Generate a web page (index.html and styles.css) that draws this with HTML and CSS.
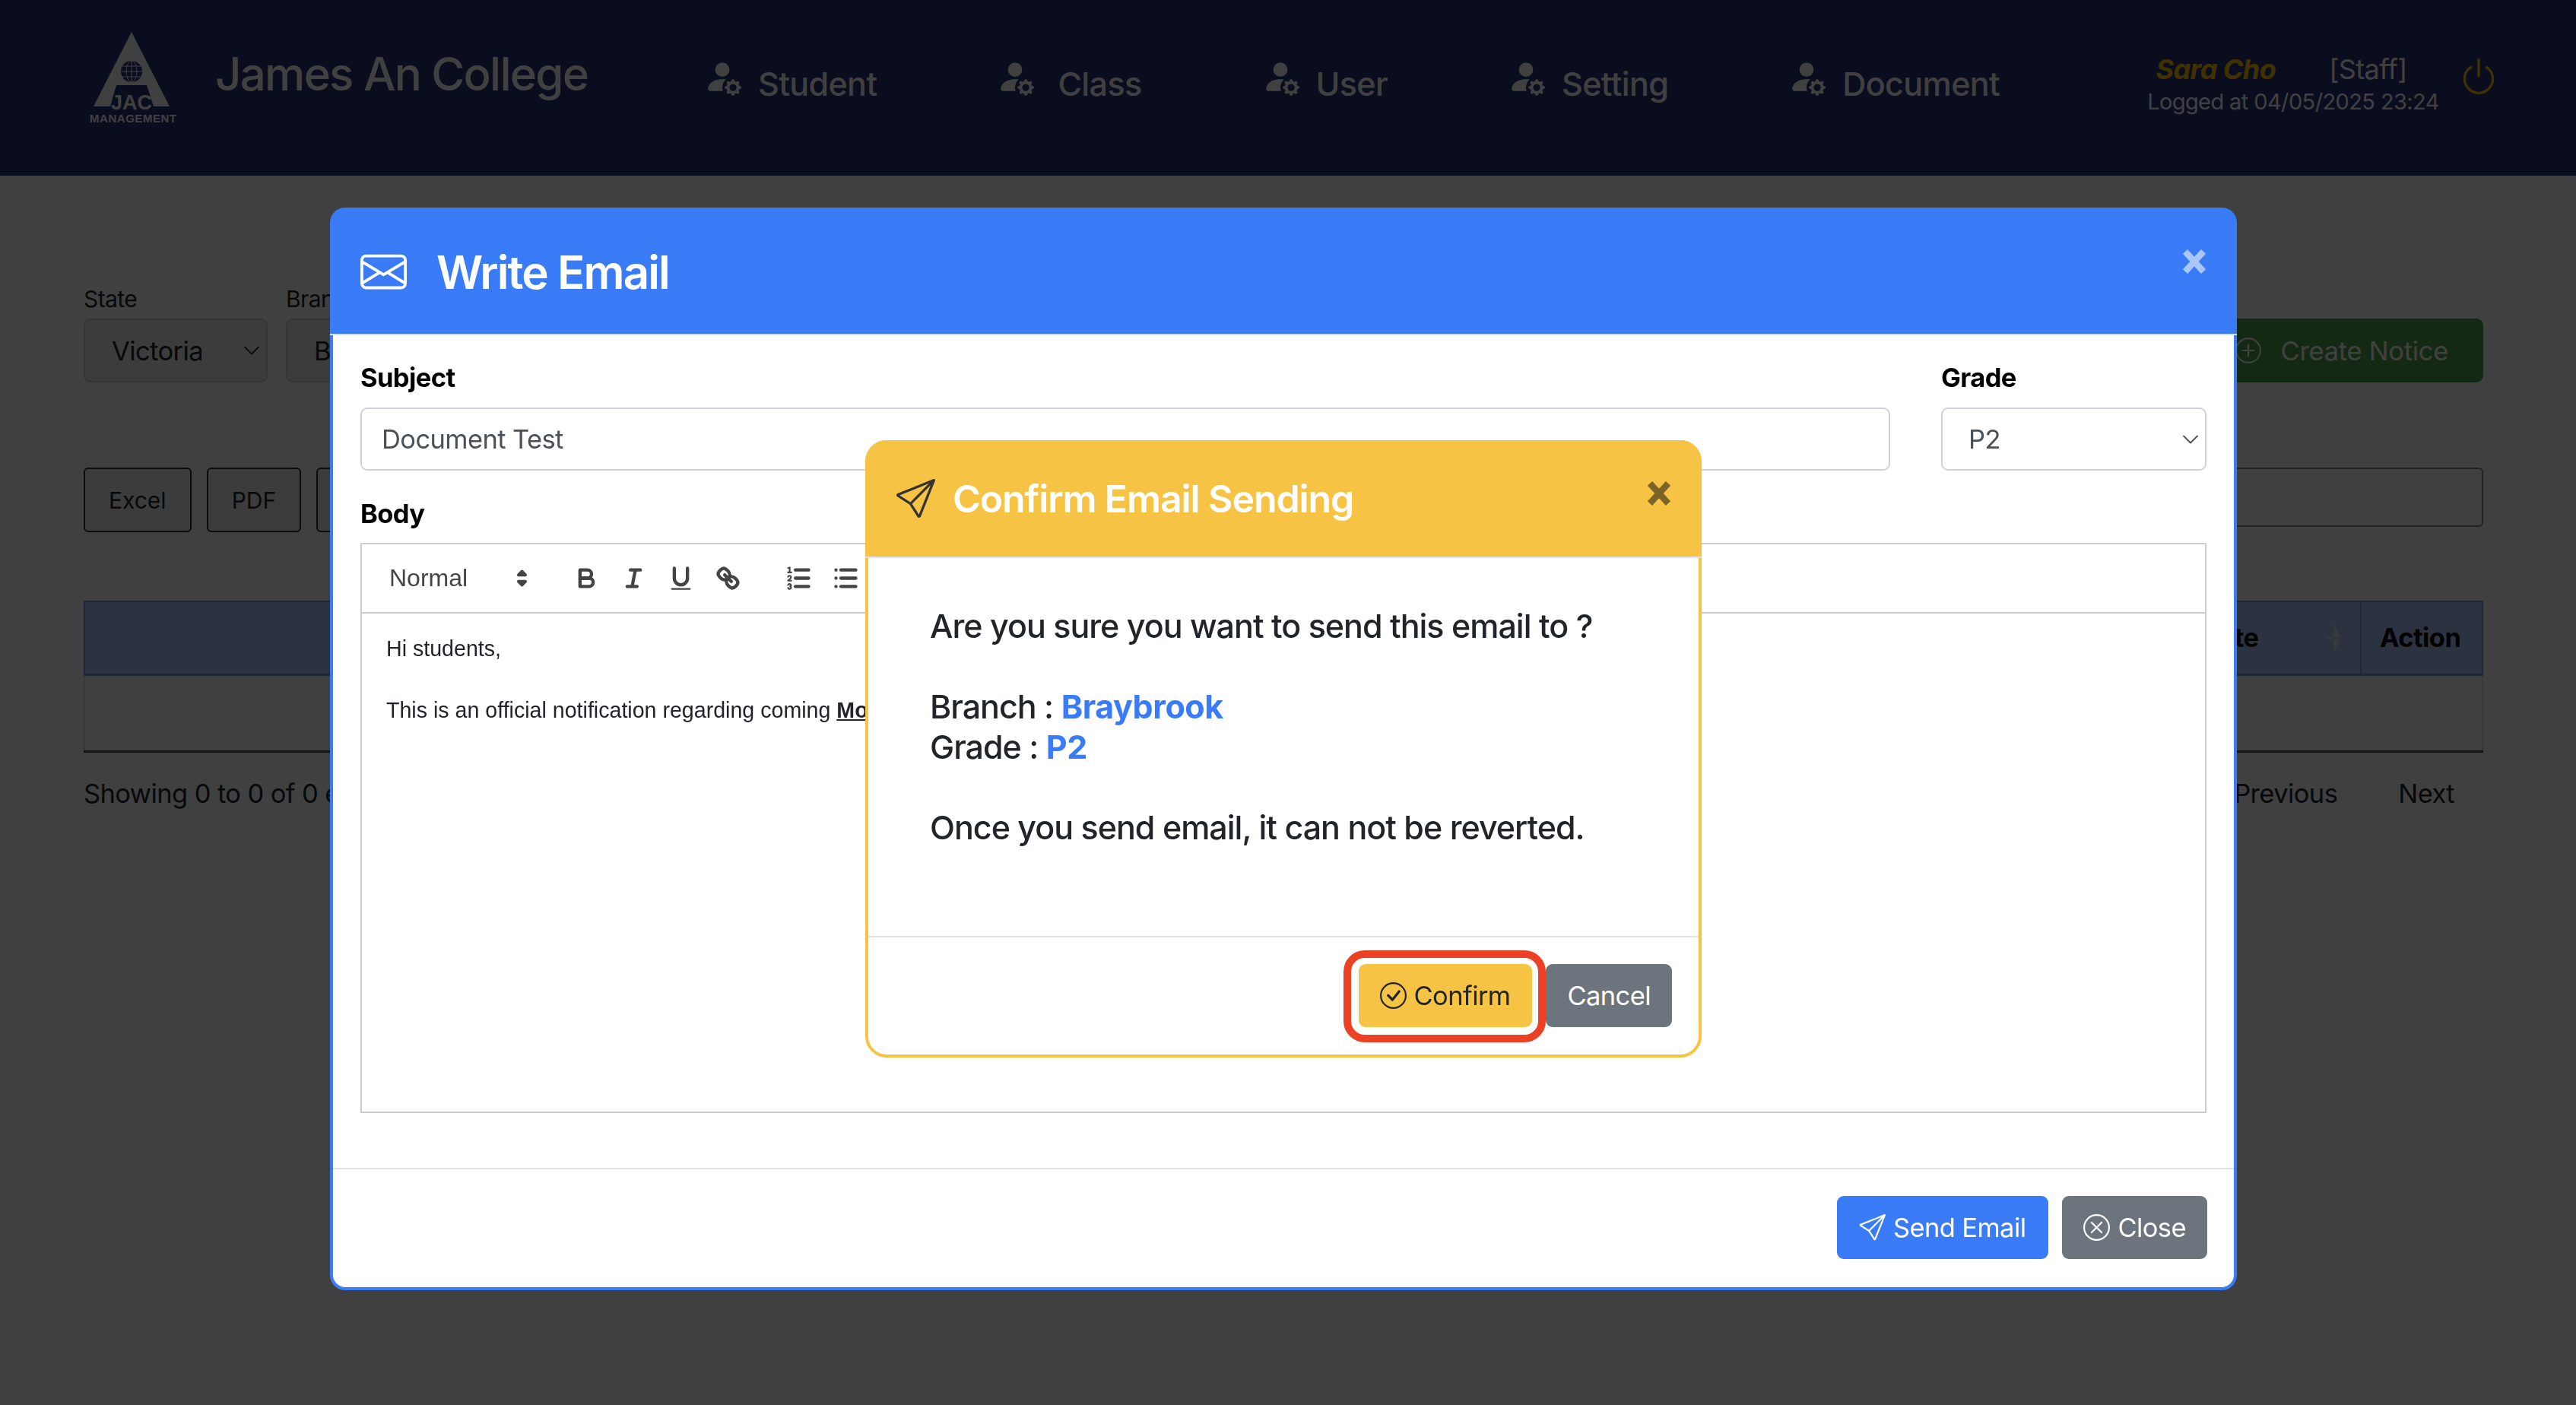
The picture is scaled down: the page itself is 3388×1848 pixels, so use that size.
FILE: index.html
```html
<!DOCTYPE html>
<html lang="en">

<head>
    <meta charset="UTF-8">
    <title>James An College</title>
    <link rel="stylesheet" href="styles.css">
</head>

<body>
    <svg class="icon-defs" width="0" height="0">
        <symbol id="i-gear" viewBox="0 0 16 16">
            <path d="M11 5a3 3 0 1 1-6 0 3 3 0 0 1 6 0Zm-9 8c0 1 1 1 1 1h5.256A4.493 4.493 0 0 1 8 12.5a4.5 4.5 0 0 1 1.544-3.393C9.077 9.038 8.564 9 8 9c-5 0-6 3-6 4Zm9.886-3.54c.18-.613 1.048-.613 1.229 0l.043.148a.64.64 0 0 0 .921.382l.136-.074c.561-.306 1.175.308.87.869l-.075.136a.64.64 0 0 0 .382.92l.149.045c.612.18.612 1.048 0 1.229l-.15.043a.64.64 0 0 0-.38.921l.074.136c.305.561-.309 1.175-.87.87l-.136-.075a.64.64 0 0 0-.92.382l-.045.149c-.18.612-1.048.612-1.229 0l-.043-.15a.64.64 0 0 0-.921-.38l-.136.074c-.561.305-1.175-.309-.87-.87l.075-.136a.64.64 0 0 0-.382-.92l-.148-.045c-.613-.18-.613-1.048 0-1.229l.148-.043a.64.64 0 0 0 .382-.921l-.074-.136c-.306-.561.308-1.175.869-.87l.136.075a.64.64 0 0 0 .92-.382l.045-.148ZM14 12.5a1.5 1.5 0 1 0-3 0 1.5 1.5 0 0 0 3 0Z" />
        </symbol>
        <symbol id="i-send" viewBox="0 0 16 16">
            <path d="M15.854.146a.5.5 0 0 1 .11.54l-5.819 14.547a.75.75 0 0 1-1.329.124l-3.178-4.995L.643 7.184a.75.75 0 0 1 .124-1.33L15.314.037a.5.5 0 0 1 .54.11ZM6.636 10.07l2.761 4.338L14.13 2.576 6.636 10.07Zm6.787-8.201L1.591 6.602l4.339 2.76 7.494-7.493Z" />
        </symbol>
        <symbol id="i-circle" viewBox="0 0 16 16">
            <path d="M8 15A7 7 0 1 1 8 1a7 7 0 0 1 0 14zm0 1A8 8 0 1 0 8 0a8 8 0 0 0 0 16z" />
        </symbol>
        <symbol id="i-chevron" viewBox="0 0 16 16">
            <path d="m2 5 6 6 6-6" fill="none" stroke="currentColor" stroke-width="1.2" stroke-linecap="round" stroke-linejoin="round" />
        </symbol>
        <symbol id="i-close" viewBox="0 0 30 30">
            <path d="M5 4l20 22M25 4L5 26" fill="none" stroke="currentColor" stroke-width="7" />
        </symbol>
    </svg>

    <div class="page">
        <header class="topbar">
            <svg class="logo" viewBox="0 0 116 125" width="116" height="125">
                <path d="M55 2 105 100H84L75 72H35L27 100H5Z" fill="currentColor" />
                <circle cx="55" cy="54" r="14" fill="#28347a" />
                <g fill="none" stroke="#fff" stroke-width="1">
                    <ellipse cx="55" cy="54" rx="7" ry="14" />
                    <path d="M55 40v28M41 54h28M43 47h24M43 61h24" />
                </g>
                <text class="logo-jac" x="55" y="104" text-anchor="middle">JAC</text>
                <text class="logo-sub" x="0" y="121" textLength="114">MANAGEMENT</text>
            </svg>
            <div class="brand">James An College</div>
            <nav class="nav">
                <a class="nav-item"><svg class="nav-icon"><use href="#i-gear" /></svg>Student</a>
                <a class="nav-item nav-item-class"><svg class="nav-icon"><use href="#i-gear" /></svg>Class</a>
                <a class="nav-item"><svg class="nav-icon"><use href="#i-gear" /></svg>User</a>
                <a class="nav-item"><svg class="nav-icon"><use href="#i-gear" /></svg>Setting</a>
                <a class="nav-item"><svg class="nav-icon"><use href="#i-gear" /></svg>Document</a>
            </nav>
            <div class="account">
                <div class="account-name"><b>Sara Cho</b><span>[Staff]</span></div>
                <div class="account-time">Logged at 04/05/2025 23:24</div>
            </div>
            <svg class="power" viewBox="0 0 16 16" width="54" height="54">
                <path d="M7.5 1v7h1V1h-1z" />
                <path d="M3 8.812a4.999 4.999 0 0 1 2.578-4.375l-.485-.874A6 6 0 1 0 11 3.616l-.501.865A5 5 0 1 1 3 8.812z" />
            </svg>
        </header>

        <main class="content">
            <div class="filters">
                <div class="filter">
                    <label>State</label>
                    <div class="page-select"><span>Victoria</span><svg class="chev"><use href="#i-chevron" /></svg></div>
                </div>
                <div class="filter">
                    <label>Branch</label>
                    <div class="page-select"><span>Braybrook</span></div>
                </div>
                <a class="btn-create">
                    <svg viewBox="0 0 16 16" width="34" height="34">
                        <use href="#i-circle" />
                        <path d="M8 4a.5.5 0 0 1 .5.5v3h3a.5.5 0 0 1 0 1h-3v3a.5.5 0 0 1-1 0v-3h-3a.5.5 0 0 1 0-1h3v-3A.5.5 0 0 1 8 4z" />
                    </svg>
                    Create Notice
                </a>
            </div>

            <div class="tools">
                <button class="tool-btn">Excel</button>
                <button class="tool-btn">PDF</button>
                <button class="tool-btn tool-hidden"></button>
                <div class="search"></div>
            </div>

            <table class="notice-table">
                <thead>
                    <tr>
                        <th></th>
                        <th class="col-date">Date<span class="sort"></span></th>
                        <th class="col-action">Action</th>
                    </tr>
                </thead>
                <tbody>
                    <tr>
                        <td colspan="3"></td>
                    </tr>
                </tbody>
            </table>

            <div class="table-foot">
                <span>Showing 0 to 0 of 0 entries</span>
                <div class="pager"><a>Previous</a><a>Next</a></div>
            </div>
        </main>
    </div>

    <div class="backdrop"></div>

    <section class="modal modal-write">
        <div class="write-head">
            <svg class="envelope" viewBox="0 0 16 16" width="61" height="61">
                <path d="M0 4a2 2 0 0 1 2-2h12a2 2 0 0 1 2 2v8a2 2 0 0 1-2 2H2a2 2 0 0 1-2-2V4Zm2-1a1 1 0 0 0-1 1v.217l7 4.2 7-4.2V4a1 1 0 0 0-1-1H2Zm13 2.383-4.708 2.825L15 11.105V5.383Zm-.034 6.876-5.64-3.471L8 9.583l-1.326-.795-5.64 3.47A1 1 0 0 0 2 13h12a1 1 0 0 0 .966-.741ZM1 11.105l4.708-2.897L1 5.383v5.722Z" />
            </svg>
            <h2>Write Email</h2>
            <svg class="close-x close-light"><use href="#i-close" /></svg>
        </div>

        <div class="write-body">
            <div class="form-row">
                <div class="field field-subject">
                    <label>Subject</label>
                    <div class="control">Document Test</div>
                </div>
                <div class="field field-grade">
                    <label>Grade</label>
                    <div class="control control-select"><span>P2</span><svg class="chev"><use href="#i-chevron" /></svg></div>
                </div>
            </div>

            <label class="body-label">Body</label>
            <div class="editor">
                <div class="toolbar">
                    <span class="picker">Normal
                        <svg class="ql" viewBox="0 0 18 18">
                            <polygon points="7 11 9 13 11 11 7 11" />
                            <polygon points="7 7 9 5 11 7 7 7" />
                        </svg>
                    </span>
                    <span class="tool-group">
                        <svg class="ql" viewBox="0 0 18 18">
                            <path d="M5,4H9.5A2.5,2.5,0,0,1,12,6.5v0A2.5,2.5,0,0,1,9.5,9H5A0,0,0,0,1,5,9V4A0,0,0,0,1,5,4Z" />
                            <path d="M5,9h5.5A2.5,2.5,0,0,1,13,11.5v0A2.5,2.5,0,0,1,10.5,14H5a0,0,0,0,1,0,0V9A0,0,0,0,1,5,9Z" />
                        </svg>
                        <svg class="ql" viewBox="0 0 18 18">
                            <path d="M7 4h6M5 14h6M8 14l2-10" />
                        </svg>
                        <svg class="ql" viewBox="0 0 18 18">
                            <path d="M5,3V9a4.012,4.012,0,0,0,4,4H9a4.012,4.012,0,0,0,4-4V3" />
                            <rect class="ql-fill" height="1" rx=".5" ry=".5" width="12" x="3" y="15" />
                        </svg>
                        <svg class="ql" viewBox="0 0 18 18">
                            <path d="M7 7l4 4" />
                            <path d="M8.9,4.577a3.476,3.476,0,0,1,.36,4.679A3.476,3.476,0,0,1,4.577,8.9C3.185,7.5,2.035,6.4,4.217,4.217S7.5,3.185,8.9,4.577Z" />
                            <path d="M13.423,9.1a3.476,3.476,0,0,0-4.679-.36,3.476,3.476,0,0,0,.36,4.679c1.392,1.392,2.5,2.542,4.679.36S14.815,10.5,13.423,9.1Z" />
                        </svg>
                    </span>
                    <span class="tool-group tool-group-lists">
                        <svg class="ql" viewBox="0 0 18 18">
                            <path d="M7 4h8M7 9h8M7 14h8" />
                            <path class="ql-thin" d="M2.5 5.5h2" />
                            <path class="ql-fill" d="M3.5,6A0.5,0.5,0,0,1,3,5.5V3.085l-0.276.138A0.5,0.5,0,0,1,2.053,3c-0.124-.247-0.023-0.324.224-0.447l1-.5A0.5,0.5,0,0,1,4,2.5v3A0.5,0.5,0,0,1,3.5,6Z" />
                            <path class="ql-thin" d="M4.5,10.5h-2c0-.234,1.85-1.076,1.85-2.234A0.959,0.959,0,0,0,2.5,8.156" />
                            <path class="ql-thin" d="M2.5,14.846a0.959,0.959,0,0,0,1.85-.109A0.7,0.7,0,0,0,3.75,14a0.688,0.688,0,0,0,.6-0.736,0.959,0.959,0,0,0-1.85-.109" />
                        </svg>
                        <svg class="ql" viewBox="0 0 18 18">
                            <path d="M6 4h9M6 9h9M6 14h9M3 4h0M3 9h0M3 14h0" />
                        </svg>
                    </span>
                </div>
                <div class="editor-text">
                    <p>Hi students,</p>
                    <p><br></p>
                    <p>This is an official notification regarding coming <strong><u>Mo</u></strong></p>
                </div>
            </div>
        </div>

        <div class="modal-foot write-foot">
            <button class="btn btn-blue">
                <svg class="btn-icon"><use href="#i-send" /></svg>Send Email
            </button>
            <button class="btn btn-grey">
                <svg class="btn-icon" viewBox="0 0 16 16">
                    <use href="#i-circle" />
                    <path d="M4.646 4.646a.5.5 0 0 1 .708 0L8 7.293l2.646-2.647a.5.5 0 0 1 .708.708L8.707 8l2.647 2.646a.5.5 0 0 1-.708.708L8 8.707l-2.646 2.647a.5.5 0 0 1-.708-.708L7.293 8 4.646 5.354a.5.5 0 0 1 0-.708z" />
                </svg>Close
            </button>
        </div>
    </section>

    <section class="modal modal-confirm">
        <div class="confirm-head">
            <svg class="confirm-send"><use href="#i-send" /></svg>
            <h3>Confirm Email Sending</h3>
            <svg class="close-x close-dark"><use href="#i-close" /></svg>
        </div>
        <div class="confirm-body">
            Are you sure you want to send this email to ?<br><br>
            Branch : <b>Braybrook</b><br>
            Grade : <b>P2</b><br><br>
            Once you send email, it can not be reverted.
        </div>
        <div class="modal-foot confirm-foot">
            <button class="btn btn-yellow">
                <svg class="btn-icon" viewBox="0 0 16 16">
                    <use href="#i-circle" />
                    <path d="M10.97 4.97a.235.235 0 0 0-.02.022L7.477 9.417 5.384 7.323a.75.75 0 0 0-1.06 1.06L6.97 11.03a.75.75 0 0 0 1.079-.02l3.992-4.99a.75.75 0 0 0-1.071-1.05z" />
                </svg>Confirm
                <span class="callout"></span>
            </button>
            <button class="btn btn-grey">Cancel</button>
        </div>
    </section>
</body>

</html>
```

FILE: styles.css
```css
* {
    box-sizing: border-box;
}

body {
    margin: 0;
    width: 3388px;
    height: 1848px;
    overflow: hidden;
    background-color: #fff;
    color: #212529;
    font-family: Inter, "Liberation Sans", sans-serif;
    font-size: 34.5px;
    letter-spacing: -0.6px;
}

.icon-defs {
    position: absolute;
}

svg {
    fill: currentColor;
    flex-shrink: 0;
}

/* page under the modals */
.topbar {
    display: flex;
    height: 231px;
    padding-left: 118px;
    background-color: #28347a;
    color: #fff;
}

.logo {
    margin-top: 40px;
}

.logo-jac {
    font-family: "Liberation Sans", sans-serif;
    font-size: 27px;
    font-weight: bold;
    letter-spacing: 0;
    fill: #fff;
}

.logo-sub {
    font-family: "Liberation Sans", sans-serif;
    font-size: 15px;
    font-weight: bold;
    letter-spacing: 0;
    fill: #fff;
}

.brand {
    width: 489px;
    margin: 58px 0 0 49px;
    font-size: 60px;
    line-height: 78px;
    font-weight: 500;
    letter-spacing: -1.75px;
    white-space: nowrap;
}

.nav {
    display: flex;
    gap: 163px;
    margin: 80px 0 0 159px;
}

.nav-item {
    display: flex;
    height: 60px;
    font-size: 43px;
    font-weight: 500;
    line-height: 60px;
}

.nav-icon {
    width: 50px;
    height: 50px;
    margin: -4px 22px 0 -6px;
}

.nav-item-class .nav-icon {
    margin-right: 31px;
}

.account {
    width: 379px;
    margin: 68px 0 0 194px;
    text-align: center;
    white-space: nowrap;
}

.account-name {
    display: flex;
    justify-content: center;
    gap: 70px;
    margin-right: 26px;
    font-size: 36px;
    line-height: 46px;
}

.account-name b {
    color: #ffc107;
    font-style: italic;
}

.account-time {
    font-size: 29px;
    line-height: 40px;
}

.power {
    margin: 74px 0 0 30px;
    color: #ffc107;
}

.content {
    padding: 0 122px 0 110px;
    color: #212529;
}

.filters {
    display: flex;
    align-items: flex-end;
    gap: 24px;
    margin-top: 144px;
}

.filter label {
    display: block;
    margin-bottom: 7px;
    font-size: 30px;
    line-height: 37px;
}

.page-select {
    display: flex;
    align-items: center;
    justify-content: space-between;
    width: 242px;
    height: 84px;
    padding: 0 7px 0 35px;
    border: 2px solid #ced4da;
    border-radius: 9px;
    background-color: #eef0ee;
}

.btn-create {
    display: flex;
    align-items: center;
    gap: 26px;
    height: 84px;
    margin-left: auto;
    padding: 0 46px 0 30px;
    border-radius: 9px;
    background-color: #51a54d;
    color: #fff;
    letter-spacing: -0.3px;
}

.tools {
    display: flex;
    align-items: flex-start;
    gap: 20px;
    margin-top: 112px;
}

.tool-btn {
    height: 85px;
    padding: 0 31px;
    border: 2px solid #333;
    border-radius: 6px;
    background-color: #f0f0f0;
    color: #212529;
    font-family: inherit;
    font-size: 30px;
}

.tool-hidden {
    width: 125px;
}

.search {
    flex: 1;
    height: 78px;
    border: 2px solid #888;
    border-radius: 6px;
}

.notice-table {
    width: 100%;
    margin-top: 90px;
    border-collapse: collapse;
    table-layout: fixed;
}

.notice-table th {
    height: 96px;
    padding: 0 24px;
    border: 2px solid #7ea0dc;
    border-bottom-width: 3px;
    background-color: #b1ccfe;
    color: #000;
    font-weight: 700;
    text-align: left;
}

.notice-table .col-date {
    position: relative;
    width: 239px;
    padding-left: 28px;
}

.col-action {
    width: 160px;
}

.sort {
    position: absolute;
    top: 28px;
    right: 26px;
    width: 18px;
    height: 39px;
    background-color: #dfe3ec;
    clip-path: polygon(50% 0, 100% 47%, 0 47%, 0 53%, 100% 53%, 50% 100%);
}

.notice-table td {
    height: 101px;
    border: 2px solid #e4e4e4;
    border-bottom: 3px solid #555;
}

.table-foot {
    display: flex;
    align-items: center;
    justify-content: space-between;
    margin-top: 33px;
}

.pager {
    display: flex;
    gap: 80px;
    margin-right: 38px;
}

.backdrop {
    position: fixed;
    inset: 0;
    background-color: rgba(0, 0, 0, 0.75);
}

/* modals */
.modal {
    position: absolute;
    display: flex;
    flex-direction: column;
    background-color: #fff;
    border-style: solid;
    border-width: 4px;
}

.modal-write {
    top: 273px;
    left: 434px;
    width: 2508px;
    height: 1424px;
    border-color: #3a7bf7;
    border-radius: 20px;
}

.write-head {
    display: flex;
    align-items: center;
    flex-shrink: 0;
    height: 165px;
    margin: -1px -4px 0;
    padding: 0 36px 0 40px;
    border-bottom: 2px solid #dee2e6;
    background-color: #3a7bf7;
    border-radius: 20px 20px 0 0;
    color: #fff;
}

.write-head h2 {
    margin: 0 0 0 39px;
    font-size: 60px;
    font-weight: 600;
    letter-spacing: -1.9px;
}

.close-x {
    width: 36px;
    height: 36px;
    margin-left: auto;
}

.close-light {
    margin-top: -28px;
    margin-right: 2px;
    color: #aac6fb;
}

.write-body {
    flex: 1;
    padding: 30px 36px 0;
}

.form-row {
    display: flex;
    gap: 67px;
}

.field-subject {
    flex: 1;
}

.field-grade {
    width: 349px;
}

.field label,
.body-label {
    display: block;
    margin-bottom: 13px;
    color: #000;
    font-weight: 700;
    font-size: 34.5px;
    line-height: 52px;
}

.control {
    height: 83px;
    padding: 0 26px;
    border: 2px solid #ced4da;
    border-radius: 9px;
    color: #495057;
    line-height: 80px;
}

.control-select {
    display: flex;
    align-items: center;
    justify-content: space-between;
    padding: 0 7px 0 34px;
}

.chev {
    width: 24px;
    height: 24px;
}

.body-label {
    margin: 31px 0 12px;
}

.editor {
    height: 750px;
    border: 2px solid #ccc;
    letter-spacing: 0;
}

.toolbar {
    display: flex;
    align-items: center;
    height: 91px;
    padding-left: 36px;
    border-bottom: 2px solid #ccc;
    color: #444;
    font-family: "Liberation Sans", sans-serif;
}

.picker {
    display: flex;
    align-items: center;
    justify-content: space-between;
    width: 218px;
    padding-right: 24px;
    font-size: 32px;
}

.ql {
    width: 39px;
    height: 39px;
    fill: none;
    stroke: #444;
    stroke-width: 2;
    stroke-linecap: round;
    stroke-linejoin: round;
}

.picker .ql {
    fill: #444;
    stroke-width: 2;
}

.ql .ql-fill {
    fill: #444;
    stroke: none;
}

.ql .ql-thin {
    stroke-width: 1;
}

.tool-group {
    display: flex;
    gap: 23px;
    margin-left: 22px;
}

.tool-group-lists {
    margin-left: 54px;
}

.editor-text {
    padding: 26px 32px;
    font-family: "Liberation Sans", sans-serif;
    font-size: 28.6px;
    line-height: 40.5px;
}

.editor-text p {
    margin: 0;
}

.modal-foot {
    display: flex;
    justify-content: flex-end;
    flex-shrink: 0;
    border-top: 2px solid #dee2e6;
}

.write-foot {
    gap: 18px;
    height: 157px;
    padding: 35px 35px 0 0;
}

.btn {
    position: relative;
    display: flex;
    align-items: center;
    height: 83px;
    padding: 0 28px;
    border: 0;
    border-radius: 9px;
    font-family: inherit;
    font-size: 34.5px;
    letter-spacing: -0.6px;
}

.btn-icon {
    width: 35px;
    height: 35px;
    margin-right: 10px;
}

.btn-blue {
    padding: 0 30px 0 29px;
    background-color: #3a7bf7;
    color: #fff;
}

.btn-grey {
    background-color: #6c757d;
    color: #fff;
}

.btn-yellow {
    padding: 0 29px 0 28px;
    background-color: #f6c344;
    color: #212529;
}

.modal-confirm {
    top: 579px;
    left: 1138px;
    width: 1100px;
    height: 812px;
    border-color: #f6c344;
    border-radius: 28px;
}

.confirm-head {
    display: flex;
    align-items: center;
    flex-shrink: 0;
    height: 155px;
    margin: -4px -4px 0;
    padding: 0 38px 0 40px;
    border-bottom: 2px solid #dee2e6;
    background-color: #f6c344;
    border-radius: 28px 28px 0 0;
    color: #fff;
}

.confirm-send {
    width: 52px;
    height: 52px;
    margin-right: 23px;
    color: #333;
}

.confirm-head h3 {
    margin: 0;
    font-size: 50px;
    font-weight: 600;
    letter-spacing: -1.1px;
}

.close-dark {
    margin-top: -14px;
    color: #7c6427;
}

.confirm-body {
    flex: 1;
    padding: 63px 80px 0 81px;
    font-size: 43px;
    font-weight: 500;
    letter-spacing: -1px;
    line-height: 53px;
}

.confirm-body b {
    color: #3a7bf7;
    font-weight: 700;
    letter-spacing: -0.4px;
}

.confirm-foot {
    gap: 18px;
    height: 156px;
    padding: 35px 35px 0 0;
}

/* red annotation round the confirm button */
.callout {
    position: absolute;
    top: -18px;
    right: -18px;
    bottom: -20px;
    left: -20px;
    border: 10px solid #ec4124;
    border-radius: 28px;
}
```
